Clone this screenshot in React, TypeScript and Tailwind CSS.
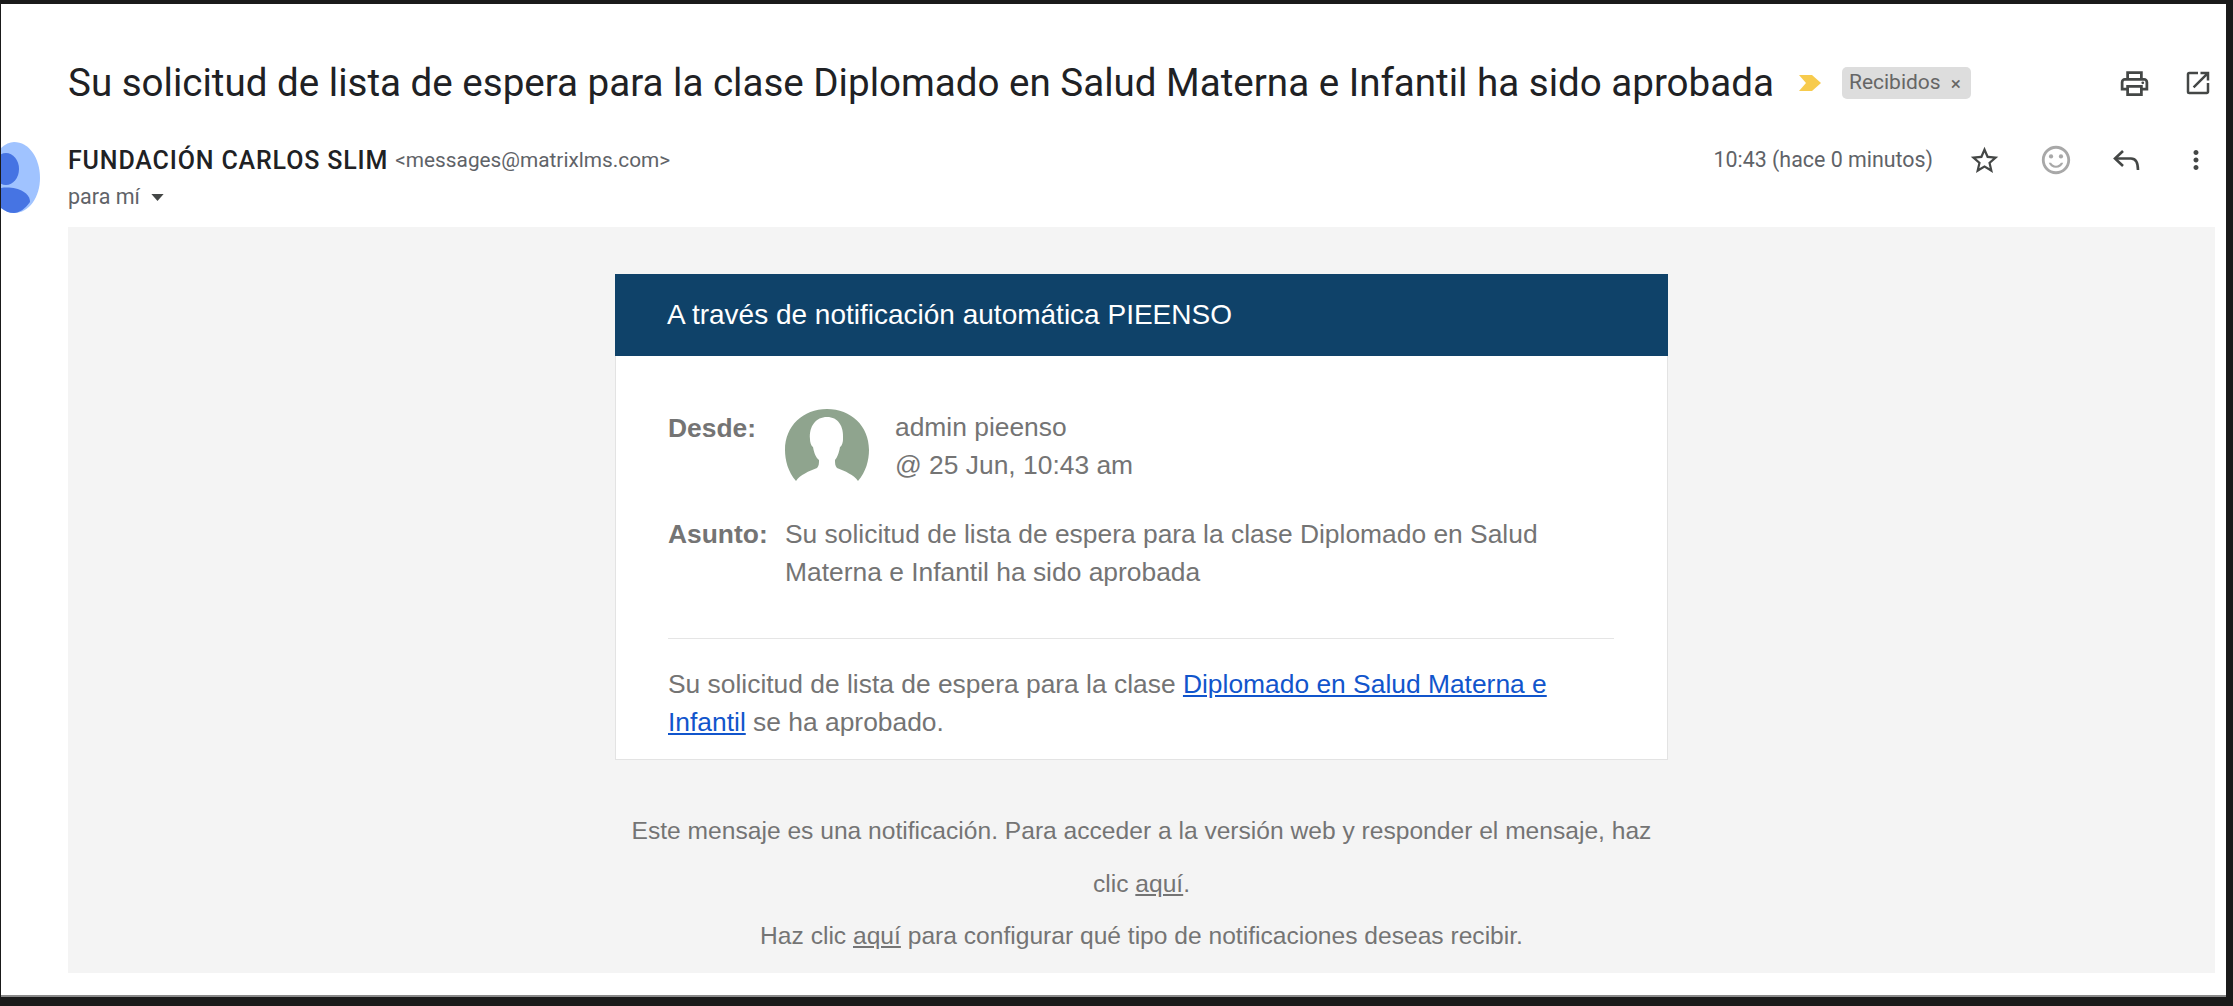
import { MdOpenInNew, MdOutlinePrint, MdStarBorder, MdOutlineSentimentSatisfied, MdMoreVert } from "react-icons/md";

const bodyFont = "font-['Liberation_Sans',Arial,sans-serif]";

const PersonAvatar = () => (
  <svg viewBox="0 0 84 72" className="h-[72px] w-[84px] shrink-0">
    <path
      fill="#8fa48e"
      d="M11 72 C3 63 0 51 0 41 C0 17 18 0 42 0 C66 0 84 17 84 41 C84 51 81 63 73 72 C69 66 60 62 52 59 C50 57 50 54 50 51 C52 49 54 44 55 38 C57 37 58 33 58 30 C59 17 53 8 42 8 C31 8 24 17 25 30 C25 33 26 37 28 38 C29 44 31 49 34 51 C34 54 34 57 32 59 C24 62 15 66 11 72 Z"
    />
  </svg>
);

const App = () => {
  return (
    <div className="h-[1006px] w-[2233px] overflow-hidden bg-[#1a1a1a] pt-[4px] pr-[7px] pl-[1px]">
      <div className="h-[993px] overflow-hidden border-b-2 border-[#8a8a8a] bg-white pr-[11px] pl-[67px]">
        {/* subject line */}
        <div className="flex h-[102px] items-end">
          <div className="flex h-[46px] w-full items-center">
            <h1 className="font-['Roboto',sans-serif] text-[38.56px] leading-[46px] whitespace-nowrap text-[#202124]">
              Su solicitud de lista de espera para la clase Diplomado en Salud Materna e Infantil ha sido aprobada
            </h1>
            <svg viewBox="0 0 22 16" className="ml-[25px] h-[16px] w-[22px] shrink-0">
              <path fill="#f7cb4d" d="M0 0 H13 L22 8 L13 16 H0 L7 8 Z" />
            </svg>
            <div className="ml-[21px] flex h-[32px] w-[129px] shrink-0 items-center gap-[10px] rounded-[5px] bg-[#dddddd] pl-[7px] font-['Roboto',sans-serif] text-[21px] text-[#666666]">
              Recibidos
              <span className="text-[19px] leading-none">×</span>
            </div>
            <div className="ml-auto flex items-center gap-[32px] pr-[2px] text-[#444746]">
              <MdOutlinePrint className="size-[33px]" />
              <MdOpenInNew className="size-[30px]" />
            </div>
          </div>
        </div>

        {/* sender row */}
        <div className="mt-[36px] flex h-[70px] items-start">
          <div className="-ml-[67px] h-[71px] w-[39px] shrink-0 overflow-hidden">
            <svg viewBox="0 0 39 71" className="h-[71px] w-[39px]">
              <path fill="#a0c3ff" d="M0 6 C4 2 9 0 13 0 C28 0 39 16 39 36 C39 55 28 71 13 71 C8 71 4 69 0 66 Z" />
              <ellipse cx="5" cy="27" rx="13" ry="16" fill="#4674e3" />
              <path fill="#4674e3" d="M0 46 C15 44 29 50 29 60 C24 67 18 71 13 71 C8 71 4 69 0 66 Z" />
            </svg>
          </div>
          <div className="ml-[28px] flex flex-col pt-[6px] font-['Roboto',sans-serif]">
            <div className="flex h-[26px] items-center whitespace-nowrap">
              <span className="text-[25px] font-medium tracking-[0.85px] text-[#202124]">FUNDACIÓN CARLOS SLIM</span>
              <span className="ml-[7px] text-[20.8px] text-[#5f6368]">&lt;messages@matrixlms.com&gt;</span>
            </div>
            <div className="mt-[11px] flex h-[24px] items-center text-[21.5px] text-[#5f6368]">
              para mí
              <svg viewBox="0 0 14 8" className="ml-[11px] h-[7px] w-[13px]">
                <path fill="#444746" d="M0 0 H14 L7 8 Z" />
              </svg>
            </div>
          </div>
          <div className="ml-auto mt-[5px] flex h-[26px] items-center pr-[4px]">
            <span className="font-['Roboto',sans-serif] text-[21.4px] whitespace-nowrap text-[#5f6368]">
              10:43 (hace 0 minutos)
            </span>
            <MdStarBorder className="ml-[35px] size-[33px] text-[#444746]" />
            <MdOutlineSentimentSatisfied className="ml-[38px] size-[34px] text-[#a8a8a8]" />
            <svg viewBox="0 0 28 24" className="ml-[39px] h-[24px] w-[28px] fill-none stroke-[#444746] stroke-[2.6]">
              <path d="M11 3 L3 10.5 L11 18" />
              <path d="M3 10.5 H19 C24 10.5 26 14 26 22" />
            </svg>
            <MdMoreVert className="ml-[41px] size-[30px] text-[#444746]" />
          </div>
        </div>

        {/* message body */}
        <div className={`mt-[15px] h-[746px] bg-[#f4f4f4] pt-[47px] ${bodyFont} text-[#747474]`}>
          <div className="mx-auto w-[1053px] border border-t-0 border-[#e3e3e3] bg-white">
            <div className="-mx-px flex h-[82px] items-center bg-[#0f4269] pl-[52px] text-[28px] text-white">
              A través de notificación automática PIEENSO
            </div>
            <div className="pr-[53px] pl-[52px] text-[26.4px] leading-[38px]">
              <div className="flex pt-[53px]">
                <div className="w-[117px] shrink-0 font-bold">Desde:</div>
                <PersonAvatar />
                <div className="-mt-px ml-[26px]">
                  <div>admin pieenso</div>
                  <div>@ 25 Jun, 10:43 am</div>
                </div>
              </div>
              <div className="mt-[31px] flex border-b border-[#e5e5e5] pb-[47px]">
                <div className="w-[117px] shrink-0 font-bold">Asunto:</div>
                <div>Su solicitud de lista de espera para la clase Diplomado en Salud Materna e Infantil ha sido aprobada</div>
              </div>
              <p className="pt-[26px] pb-[18px]">
                Su solicitud de lista de espera para la clase{" "}
                <a className="text-[#1155cc] underline">Diplomado en Salud Materna e Infantil</a> se ha aprobado.
              </p>
            </div>
          </div>
          <div className="mx-auto mt-[44px] w-[1053px] text-center text-[24.6px]">
            <p className="leading-[53px]">
              Este mensaje es una notificación. Para acceder a la versión web y responder el mensaje, haz clic{" "}
              <a className="underline">aquí</a>.
            </p>
            <p className="leading-[52px]">
              Haz clic <a className="underline">aquí</a> para configurar qué tipo de notificaciones deseas recibir.
            </p>
          </div>
        </div>
      </div>
    </div>
  );
};

export default App;
